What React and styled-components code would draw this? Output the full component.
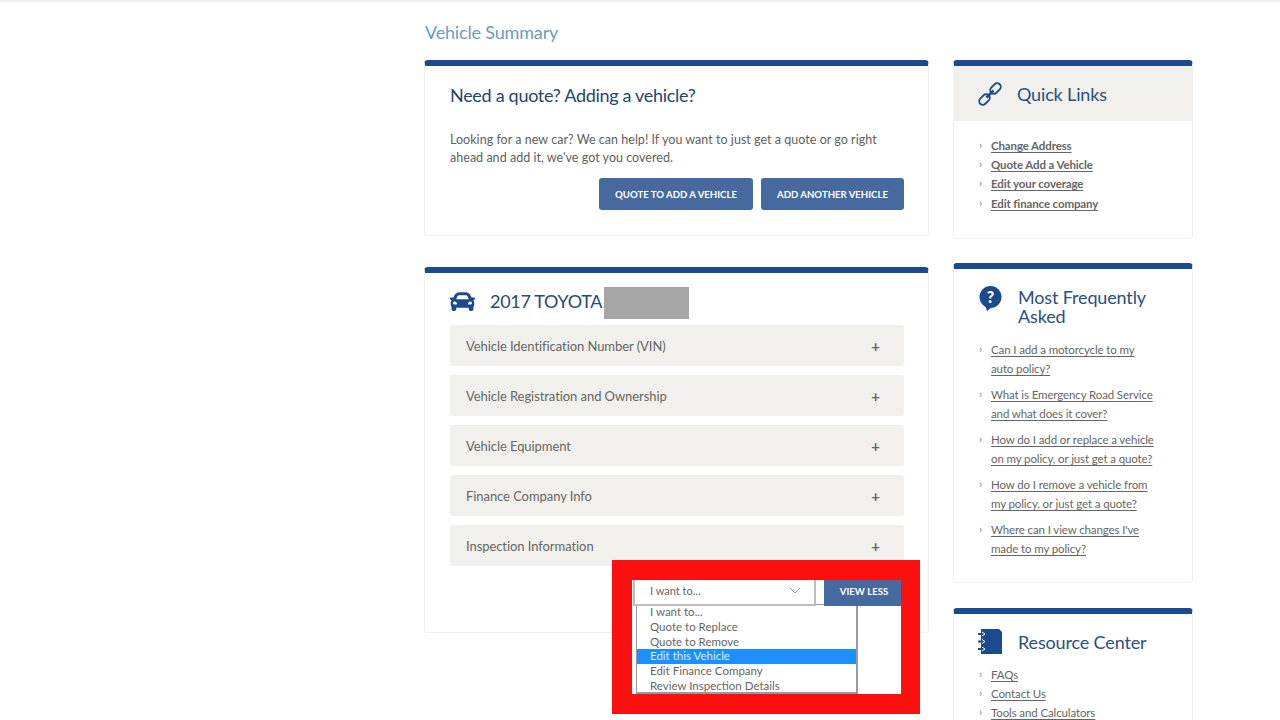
import React from "react";
import styled, { createGlobalStyle } from "styled-components";
import { FaCar } from "react-icons/fa";

const Global = createGlobalStyle`
  html, body { margin: 0; padding: 0; background: #fff; overflow: hidden; }
  body { font-family: Lato, "Open Sans", sans-serif; color: #5c5c5c; }
  * { box-sizing: border-box; }
`;

const Page = styled.div`
  width: 1280px;
  height: 720px;
  overflow: hidden;
  border-top: 2px solid #eeeeee;
  display: grid;
  grid-template-columns: 505px 240px;
  column-gap: 24px;
  padding-left: 424px;
  align-items: start;
`;
const Column = styled.div`
  display: flex;
  flex-direction: column;
  padding-top: ${(p) => p.$top || 0}px;
`;
const PageTitle = styled.h1`
  margin: 0;
  height: 58px;
  padding: 18px 0 0 1px;
  font-size: 18px;
  line-height: 25px;
  letter-spacing: -0.17px;
  font-weight: 400;
  color: #6a9cc4;
`;
const Card = styled.section`
  position: relative;
  background: #fff;
  border: 1px solid #f1f1f1;
  border-top: 6px solid #1c4a8e;
  border-radius: 4px 4px 3px 3px;
  height: ${(p) => p.$h}px;
  margin-bottom: ${(p) => p.$mb || 0}px;
`;
const CardBody = styled.div`
  padding: 16px 24px 0 25px;
`;
const CardHeading = styled.h2`
  margin: 0 0 23px;
  font-size: 18px;
  line-height: 26px;
  letter-spacing: -0.3px;
  font-weight: 400;
  color: #25446f;
`;
const Paragraph = styled.p`
  margin: 0;
  font-size: 12.5px;
  line-height: 18px;
  letter-spacing: 0.03px;
  color: #606060;
`;
const ButtonRow = styled.div`
  display: flex;
  justify-content: flex-end;
  gap: 8px;
  margin-top: 11px;
`;
const Button = styled.button`
  height: 32px;
  width: ${(p) => p.$w}px;
  padding: 0;
  border: 0;
  border-radius: 3px;
  background: #46699f;
  color: #fff;
  font-family: inherit;
  font-size: 9.6px;
  font-weight: 700;
`;
const VehicleHead = styled.div`
  display: flex;
  align-items: center;
  height: 52px;
  padding: 4px 0 0 25px;
  color: #1c4a8e;
`;
const VehicleName = styled.h2`
  margin: 0 0 0 15px;
  font-size: 18px;
  font-weight: 400;
  color: #2b4a75;
  letter-spacing: -0.3px;
`;
const Redaction = styled.div`
  width: 85px;
  height: 32px;
  margin: 4px 0 0 2px;
  background: #a6a6a6;
`;
const Accordion = styled.div`
  display: flex;
  flex-direction: column;
  gap: 9px;
  padding: 0 24px 0 25px;
`;
const AccordionRow = styled.div`
  height: 41px;
  display: flex;
  align-items: center;
  justify-content: space-between;
  padding: 0 24px 0 16px;
  border-radius: 3px;
  background: #f2f0ec;
  font-size: 13px;
  letter-spacing: -0.07px;
  color: #666;
`;
const Plus = styled.span`
  font-size: 15px;
  font-weight: 700;
  color: #666;
`;
const Highlight = styled.div`
  position: absolute;
  left: 187px;
  top: 287px;
  width: 308px;
  height: 154px;
  border: 20px solid #fb0f0f;
  border-right-width: 19px;
  background: #fff;
`;
const SelectRow = styled.div`
  display: flex;
`;
const Select = styled.div`
  width: 183px;
  height: 26px;
  display: flex;
  align-items: center;
  justify-content: space-between;
  padding: 0 13px 3px 15px;
  margin-left: 1px;
  border-left: 2px solid #bdbdbd;
  border-right: 2px solid #bdbdbd;
  border-bottom: 2px solid #bdbdbd;
  font-size: 11px;
  color: #666;
`;
const ViewLess = styled.div`
  width: 77px;
  height: 26px;
  margin-left: 8px;
  padding: 0 0 4px 3px;
  display: flex;
  align-items: center;
  justify-content: center;
  background: #46699f;
  color: #fff;
  font-size: 9.6px;
  font-weight: 700;
`;
const Options = styled.ul`
  list-style: none;
  margin: -2px 0 0 4px;
  padding: 0;
  width: 222px;
  height: 90px;
  overflow: hidden;
  background: #fff;
  border: 1px solid #9a9a9a;
  border-bottom-width: 2px;
  border-right-width: 2px;
`;
const Option = styled.li`
  height: 14.8px;
  line-height: 14.8px;
  padding-left: 13px;
  font-size: 11.5px;
  color: ${(p) => (p.$active ? "#d8f0ff" : "#666")};
  background: ${(p) => (p.$active ? "#1e8fff" : "transparent")};
`;
const SideHeader = styled.div`
  display: flex;
  align-items: center;
  gap: 14px;
  height: 55px;
  padding-left: 23px;
  background: #f2f0ec;
`;
const SideTitle = styled.h2`
  margin: ${(p) => p.$mt || 0}px 0 0;
  font-size: 18px;
  line-height: ${(p) => p.$lh || 19}px;
  letter-spacing: -0.15px;
  font-weight: 400;
  color: #2b4f80;
`;
const SideHead = styled.div`
  display: flex;
  align-items: flex-start;
  gap: ${(p) => p.$gap || 15}px;
  padding: ${(p) => p.$pad};
`;
const LinkList = styled.ul`
  list-style: none;
  margin: 0;
  padding: ${(p) => p.$pad || "0 24px 0 24px"};
  display: flex;
  flex-direction: column;
  gap: ${(p) => p.$gap || 0}px;
`;
const LinkItem = styled.li`
  position: relative;
  padding-left: 13px;
  font-size: 11.5px;
  line-height: 19.2px;
  color: #666;
  letter-spacing: -0.12px;
  font-weight: ${(p) => (p.$bold ? 700 : 400)};
  &::before {
    content: "›";
    position: absolute;
    left: 1px;
    top: -1px;
    font-weight: 400;
    color: #888;
  }
`;
const Anchor = styled.a`
  color: inherit;
  text-decoration: underline;
  text-underline-offset: 2px;
`;

const ChainIcon = () => (
  <svg width="26" height="26" viewBox="0 0 26 26" fill="none" stroke="#1c4a8e" strokeWidth="1.8">
    <rect x="-6" y="-3.6" width="12" height="7.2" rx="3.6" transform="translate(7.5 18.5) rotate(-45)" />
    <rect x="-6" y="-3.6" width="12" height="7.2" rx="3.6" transform="translate(18.5 7.5) rotate(-45)" />
    <path d="M9.5 16.5 L16.5 9.5" strokeWidth="2.6" />
  </svg>
);
const QuestionIcon = () => (
  <svg width="24" height="26" viewBox="0 0 24 26">
    <circle cx="11.5" cy="11" r="11" fill="#1c4a8e" />
    <path d="M6 19 L8 25 L13 21 Z" fill="#1c4a8e" />
    <text x="11.5" y="17" textAnchor="middle" fontFamily="Lato, sans-serif" fontWeight="900" fontSize="16" fill="#fff">?</text>
  </svg>
);
const NotebookIcon = () => (
  <svg width="25" height="26" viewBox="0 0 25 26">
    <path d="M3 0 H21 L24 3 V25 H3 Z" fill="#1c4a8e" />
    <path d="M0 5 H6 M0 12.5 H6 M0 20 H6" stroke="#1c4a8e" strokeWidth="2" />
    <path d="M4 3 L7 5 L4 7 M4 10.5 L7 12.5 L4 14.5 M4 18 L7 20 L4 22" stroke="#fff" strokeWidth="1" fill="none" />
  </svg>
);
const Chevron = () => (
  <svg width="12" height="7" viewBox="0 0 12 7" fill="none" stroke="#9a9a9a" strokeWidth="1">
    <path d="M1 1 L6 6 L11 1" />
  </svg>
);

const rows = [
  "Vehicle Identification Number (VIN)",
  "Vehicle Registration and Ownership",
  "Vehicle Equipment",
  "Finance Company Info",
  "Inspection Information",
];
const options = [
  "I want to...",
  "Quote to Replace",
  "Quote to Remove",
  "Edit this Vehicle",
  "Edit Finance Company",
  "Review Inspection Details",
];
const quick = ["Change Address", "Quote Add a Vehicle", "Edit your coverage", "Edit finance company"];
const faqs = [
  ["Can I add a motorcycle to my", "auto policy?"],
  ["What is Emergency Road Service", "and what does it cover?"],
  ["How do I add or replace a vehicle", "on my policy, or just get a quote?"],
  ["How do I remove a vehicle from", "my policy, or just get a quote?"],
  ["Where can I view changes I've", "made to my policy?"],
];
const resources = ["FAQs", "Contact Us", "Tools and Calculators"];

export default function App() {
  return (
    <>
      <Global />
      <Page>
        <Column>
          <PageTitle>Vehicle Summary</PageTitle>
          <Card $h={176} $mb={31}>
            <CardBody>
              <CardHeading>Need a quote? Adding a vehicle?</CardHeading>
              <Paragraph>
                Looking for a new car? We can help! If you want to just get a quote or go right
                <br />
                ahead and add it, we've got you covered.
              </Paragraph>
              <ButtonRow>
                <Button $w={154}>QUOTE TO ADD A VEHICLE</Button>
                <Button $w={143}>ADD ANOTHER VEHICLE</Button>
              </ButtonRow>
            </CardBody>
          </Card>
          <Card $h={366}>
            <VehicleHead>
              <FaCar size={25} />
              <VehicleName>2017 TOYOTA</VehicleName>
              <Redaction />
            </VehicleHead>
            <Accordion>
              {rows.map((r) => (
                <AccordionRow key={r}>
                  {r}
                  <Plus>+</Plus>
                </AccordionRow>
              ))}
            </Accordion>
            <Highlight>
              <SelectRow>
                <Select>
                  I want to...
                  <Chevron />
                </Select>
                <ViewLess>VIEW LESS</ViewLess>
              </SelectRow>
              <Options>
                {options.map((o) => (
                  <Option key={o} $active={o === "Edit this Vehicle"}>
                    {o}
                  </Option>
                ))}
              </Options>
            </Highlight>
          </Card>
        </Column>
        <Column $top={58}>
          <Card $h={179} $mb={24}>
            <SideHeader>
              <ChainIcon />
              <SideTitle $mt={2}>Quick Links</SideTitle>
            </SideHeader>
            <LinkList $pad="15px 24px 0 24px">
              {quick.map((q) => (
                <LinkItem key={q} $bold>
                  <Anchor>{q}</Anchor>
                </LinkItem>
              ))}
            </LinkList>
          </Card>
          <Card $h={320} $mb={25}>
            <SideHead $pad="17px 10px 14px 25px">
              <QuestionIcon />
              <SideTitle $mt={2}>
                Most Frequently
                <br />
                Asked
              </SideTitle>
            </SideHead>
            <LinkList $gap={6.6}>
              {faqs.map(([a, b]) => (
                <LinkItem key={a}>
                  <Anchor>
                    {a}
                    <br />
                    {b}
                  </Anchor>
                </LinkItem>
              ))}
            </LinkList>
          </Card>
          <Card $h={130}>
            <SideHead $pad="15px 10px 10px 24px" $gap={15}>
              <NotebookIcon />
              <SideTitle $lh={26}>Resource Center</SideTitle>
            </SideHead>
            <LinkList>
              {resources.map((r) => (
                <LinkItem key={r}>
                  <Anchor>{r}</Anchor>
                </LinkItem>
              ))}
            </LinkList>
          </Card>
        </Column>
      </Page>
    </>
  );
}
